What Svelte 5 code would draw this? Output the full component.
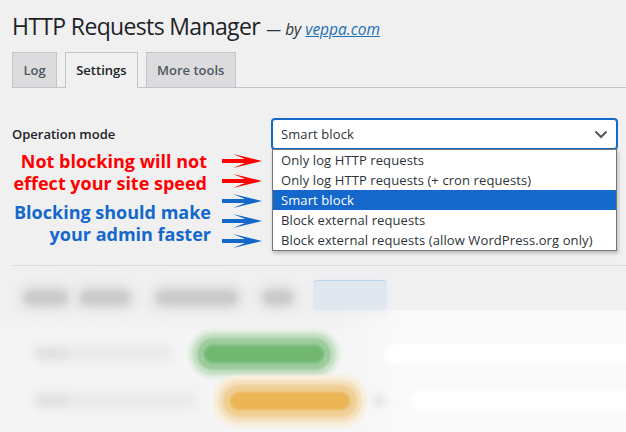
<script>
  const options = [
    'Only log HTTP requests',
    'Only log HTTP requests (+ cron requests)',
    'Smart block',
    'Block external requests',
    'Block external requests (allow WordPress.org only)'
  ];
  let selected = 2;
  const arrows = ['#fe0000', '#fe0000', '#1468cc', '#1468cc', '#1468cc'];
</script>

<div class="page">
  <h1>HTTP Requests Manager <small>— by <a href="#top">veppa.com</a></small></h1>

  <nav class="tabs">
    <span class="tab">Log</span>
    <span class="tab active">Settings</span>
    <span class="tab">More tools</span>
  </nav>

  <div class="form-row">
    <div class="label">Operation mode</div>
    <div class="select-wrap">
      <div class="select">
        <span>{options[selected]}</span>
        <svg width="14" height="14" viewBox="0 0 14 14"><path d="M1.500 4.500 7 10l5.500-5.500" fill="none" stroke="#50575e" stroke-width="2"/></svg>
      </div>
      <ul class="dropdown">
        {#each options as opt, i}
          <li class:current={i === selected}>{opt}</li>
        {/each}
      </ul>
    </div>
  </div>

  <div class="notes">
    <div class="note red">
      <div>Not blocking will not</div>
      <div>effect your site speed</div>
    </div>
    <div class="note blue">
      <div>Blocking should make</div>
      <div>your admin faster</div>
    </div>
  </div>

  <div class="arrows">
    {#each arrows as color}
      <svg width="41" height="20" viewBox="0 0 41 20"><path d="M0 8h23L11 3l29 7-29 7 12-5H0z" fill={color}/></svg>
    {/each}
  </div>

  <hr />

  <div class="blurred">
    <div class="filters">
      <i></i>
      <i></i>
      <i></i>
      <i></i>
      <b></b>
    </div>
    <div class="panel">
      <div class="stat first">
        <i class="name"></i>
        <i class="bar green"></i>
        <i class="band"></i>
      </div>
      <div class="stat second">
        <i class="name"></i>
        <i class="bar orange"></i>
        <i class="dot"></i>
        <i class="band"></i>
      </div>
    </div>
  </div>
</div>

<style>
  :global(body) {
    margin: 0;
    background: #f0f0f1;
  }

  .page {
    position: relative;
    width: 626px;
    height: 432px;
    overflow: hidden;
    box-sizing: border-box;
    padding: 12px 0 0 12px;
    font-family: "Open Sans", "Liberation Sans", sans-serif;
    font-size: 13px;
    color: #3c434a;
  }

  h1 {
    margin: 0;
    height: 29px;
    font-size: 23px;
    line-height: 29px;
    font-weight: 400;
    letter-spacing: -0.65px;
    color: #1d2327;
    white-space: nowrap;
  }

  h1 small {
    margin-left: 1px;
    font-size: 15.500px;
    line-height: 1;
    font-style: italic;
    letter-spacing: 0;
    color: #2c3338;
  }

  h1 a {
    color: #2271b1;
  }

  .tabs {
    display: flex;
    gap: 7.500px;
    margin-top: 11px;
    height: 36px;
    box-sizing: border-box;
    border-bottom: 1px solid #c3c4c7;
  }

  .tab {
    height: 35px;
    box-sizing: border-box;
    padding: 0 10.500px;
    line-height: 35px;
    font-weight: 600;
    font-size: 13px;
    color: #50575e;
    background: #dcdcde;
    border: 1px solid #c3c4c7;
    border-bottom: none;
  }

  .tab.active {
    height: 36px;
    color: #1d2327;
    background: #f0f0f1;
  }

  .form-row {
    display: flex;
    margin-top: 31px;
    align-items: center;
  }

  .label {
    width: 260px;
    font-weight: 600;
    color: #1d2327;
  }

  .select-wrap {
    position: relative;
    width: 345px;
  }

  .select {
    display: flex;
    align-items: center;
    justify-content: space-between;
    box-sizing: border-box;
    height: 30px;
    padding: 0 8px;
    background: #fff;
    border: 1px solid #1468cc;
    border-radius: 3px;
    box-shadow: 0 0 0 1px #1468cc;
    color: #2c3338;
    letter-spacing: 0.1px;
  }

  .dropdown {
    position: absolute;
    z-index: 3;
    top: 30px;
    left: 0;
    right: 0;
    margin: 0;
    padding: 0;
    list-style: none;
    background: #fff;
    border: 1px solid #767676;
    box-shadow: 1px 2px 4px rgba(0, 0, 0, 0.25);
    letter-spacing: 0.1px;
  }

  .dropdown li {
    height: 20px;
    line-height: 20px;
    padding: 0 8px;
    color: #2c3338;
    white-space: nowrap;
  }

  .dropdown li.current {
    background: #1468cc;
    color: #fff;
  }

  .notes {
    position: absolute;
    top: 150px;
    left: 0;
    width: 211px;
    text-align: right;
    font-weight: 700;
    font-size: 18px;
    line-height: 22px;
    white-space: nowrap;
  }

  .note.red {
    padding-right: 4px;
    color: #fe0000;
  }

  .note.blue {
    margin-top: 7px;
    color: #1468cc;
  }

  .arrows {
    position: absolute;
    left: 222px;
    top: 151px;
    display: flex;
    flex-direction: column;
  }

  .arrows svg {
    display: block;
  }

  hr {
    position: absolute;
    left: 12px;
    right: 0;
    top: 265px;
    margin: 0;
    border: none;
    border-top: 1px solid #dcdcde;
  }

  .blurred {
    position: absolute;
    left: 0;
    top: 280px;
    width: 100%;
  }

  .filters {
    display: flex;
    align-items: center;
    padding-left: 24px;
    height: 30px;
  }

  .filters i {
    height: 15px;
    margin-top: 4px;
    border-radius: 8px;
    background: #cacaca;
    box-shadow: 0 0 8px 6px #e0e0e0;
    filter: blur(3px);
  }

  .filters i:nth-child(1) {
    width: 44px;
  }

  .filters i:nth-child(2) {
    width: 50px;
    margin-left: 12px;
  }

  .filters i:nth-child(3) {
    width: 82px;
    margin-left: 26px;
  }

  .filters i:nth-child(4) {
    width: 30px;
    margin-left: 25px;
  }

  .filters b {
    width: 74px;
    height: 29px;
    margin-left: 20px;
    border-radius: 4px;
    background: #e1e7ef;
    border-top: 1px solid #bcd6ee;
    box-shadow: 0 0 6px 3px #ebeef2;
  }

  .panel {
    padding-top: 20px;
    height: 122px;
    box-sizing: border-box;
    background:
      linear-gradient(90deg, rgba(250, 250, 250, 0) 340px, #fafafa 410px),
      linear-gradient(180deg, #f0f0f1, #f5f5f5 22px);
  }

  .stat {
    display: flex;
    align-items: center;
    height: 47px;
  }

  .name {
    height: 11px;
    margin-left: 35px;
    background: linear-gradient(90deg, #dedee0 0 28px, #e8e8e8 36px);
    border-radius: 6px;
    box-shadow: 0 0 10px 5px #eeeeee;
    filter: blur(4px);
  }

  .first .name {
    width: 135px;
  }

  .second .name {
    width: 160px;
  }

  .bar {
    width: 120px;
    height: 18px;
    border-radius: 9px;
    filter: blur(1px);
  }

  .green {
    margin-left: 34px;
    background: #72b872;
    box-shadow: 0 0 0 7px #9ccc9c, 0 0 0 12px #c5e0c5, 0 0 0 16px #e2eee2;
  }

  .orange {
    margin-left: 35px;
    background: #ecb656;
    box-shadow: 0 0 0 7px #f0cf94, 0 0 0 12px #f4e0bc, 0 0 0 17px #f7eedd;
  }

  .dot {
    width: 14px;
    height: 14px;
    margin-left: 22px;
    border-radius: 50%;
    background: #e8e8e8;
    filter: blur(3px);
  }

  .band {
    flex: 1;
    height: 19px;
    margin-right: -20px;
    border-radius: 9px 0 0 9px;
    background: #fff;
    filter: blur(2px);
  }

  .first .band {
    margin-left: 61px;
  }

  .second .band {
    margin-left: 26px;
  }
</style>
